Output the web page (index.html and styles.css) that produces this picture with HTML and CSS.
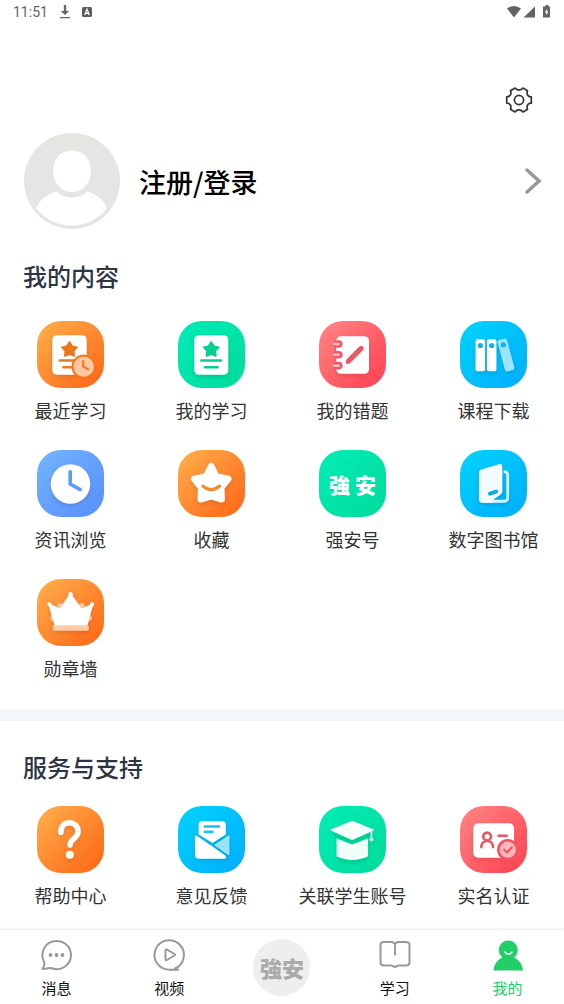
FILE: index.html
```html
<!DOCTYPE html>
<html lang="zh-CN">
<head>
  <meta charset="UTF-8" />
  <meta name="viewport" content="width=device-width, initial-scale=1.0"/>
  <title>我的</title>
  <link rel="stylesheet" href="styles.css">
</head>
<body>

  <div class="status-bar">
    <span class="time">11:51</span>
    <svg width="12" height="14" viewBox="0 0 12 14"><path d="M4.800 0h2.400v6h3L6 10 1.800 6h3zM1 12h10v1.200H1z" fill="#666"/></svg>
    <svg class="app-badge" width="10" height="10" viewBox="0 0 10 10"><rect width="10" height="10" rx="1.500" fill="#5c5c5c"/><path d="M2.700 8 5 2.300 7.300 8M3.600 6.300h2.800" fill="none" stroke="#fff" stroke-width="1.300"/></svg>
    <svg class="signals" width="44" height="14" viewBox="0 0 44 14">
      <path d="M0 3.500Q7 -1.500 14 3.500L7 12.500z" fill="#636363"/>
      <path d="M28 1.500v11H16.500z" fill="#636363"/>
      <path d="M37 1.500h1.500V0h3v1.500H43V12.500h-7V1.500z" fill="#636363"/>
      <path d="M40.300 3.500 37.800 7.500h1.500v3l2.200-4h-1.500z" fill="#fff"/>
    </svg>
  </div>

  <main>
    <div class="toolbar">
      <button class="settings" aria-label="设置">
        <svg width="28" height="28" viewBox="0 0 28 28" fill="none" stroke="#333" stroke-width="1.700" stroke-linejoin="round">
          <path d="M10 2.100Q11.500 4.200 14 4.200T18 2.100L22.500 4.700Q21.500 7 22.600 9T26.300 10.800V17.200Q23.700 17.200 22.600 19T22.500 23.300L18 25.900Q16.500 23.800 14 23.800T10 25.900L5.500 23.300Q6.500 21 5.400 19T1.700 17.200V10.800Q4.300 10.800 5.400 9T5.500 4.700Z"/>
          <circle cx="14" cy="14" r="4.600"/>
        </svg>
      </button>
    </div>

    <a class="profile" href="#login">
      <svg class="avatar" width="96" height="96" viewBox="0 0 96 96">
        <circle cx="48" cy="48" r="48" fill="#e5e5e4"/>
        <path d="M48 17.500c11 0 19 8.500 19 20.500S59 59 48 59 29 50 29 38s8-20.500 19-20.500z" fill="#fff"/>
        <path d="M12 75C17 65 25 60.500 32.500 58.500 41 66.500 55 66.500 63.500 58.500 71 60.500 79 66 83 75 65 98.500 30 98.500 12 75z" fill="#fff"/>
      </svg>
      <span class="login">注册/登录</span>
      <svg width="18" height="28" viewBox="0 0 18 28"><path d="M3 3 15 14 3 25" fill="none" stroke="#999" stroke-width="3.500" stroke-linecap="round"/></svg>
    </a>

    <section class="content">
      <h2>我的内容</h2>
      <div class="grid">
        <a class="item" href="#recent">
          <svg class="tile orange" viewBox="0 0 66 66">
            <g class="raised"><rect x="15" y="14" width="34" height="39" rx="4.500" fill="#fff"/></g>
            <path d="M32 20.500l2.700 4.300 4.800 1-3.300 3.800.5 4.900-4.700-1.800-4.700 1.800.5-4.900-3.300-3.800 4.800-1z" fill="#e9781f" stroke="#e9781f" stroke-width="1.500" stroke-linejoin="round"/>
            <path d="M22.500 39H39M26 45.500h9" stroke="#e9781f" stroke-width="2.400" stroke-linecap="round"/>
            <circle cx="46" cy="45" r="12" fill="#f5751d"/>
            <circle cx="46" cy="45" r="10" fill="#ffc8a0"/>
            <path d="M45.500 39.500v5.500l5 2.500" fill="none" stroke="#f27420" stroke-width="2" stroke-linecap="round"/>
          </svg>
          <span>最近学习</span>
        </a>
        <a class="item" href="#study">
          <svg class="tile green" viewBox="0 0 66 66">
            <g class="raised"><rect x="16" y="14" width="33.500" height="39" rx="4.500" fill="#fff"/></g>
            <path d="M32.700 20.500l2.700 4.300 4.800 1-3.300 3.800.5 4.900-4.700-1.800-4.700 1.800.5-4.900-3.300-3.800 4.800-1z" fill="#06cf91" stroke="#06cf91" stroke-width="1.500" stroke-linejoin="round"/>
            <path d="M23 39h19.500M26.500 45.500h12.500" stroke="#06cf91" stroke-width="2.400" stroke-linecap="round"/>
          </svg>
          <span>我的学习</span>
        </a>
        <a class="item" href="#mistakes">
          <svg class="tile red" viewBox="0 0 66 66">
            <g class="raised"><rect x="17" y="15" width="32.300" height="37" rx="4.500" fill="#fff"/></g>
            <path d="M18 22.700h1.500M18 33.300h1.500M18 44h1.500" stroke="#ef5864" stroke-width="7.500" stroke-linecap="round"/>
            <path d="M14.800 22.700h4.500M14.800 33.300h4.500M14.800 44h4.500" stroke="#ffc1c4" stroke-width="2.400" stroke-linecap="round"/>
            <path d="M29 39.500 41.500 27" stroke="#ea5964" stroke-width="5" stroke-linecap="round"/>
            <path d="M26.500 38.500v3.500h3.500z" fill="#ea5964"/>
          </svg>
          <span>我的错题</span>
        </a>
        <a class="item" href="#download">
          <svg class="tile blue" viewBox="0 0 66 66">
            <g class="raised">
              <rect x="15.300" y="18" width="9.400" height="31.500" rx="2" fill="#fff"/>
              <rect x="26.500" y="18" width="9.400" height="31.500" rx="2" fill="#fff"/>
              <rect x="40.500" y="17.500" width="9.600" height="32" rx="2" fill="#9ce4fb" transform="rotate(-15 45.300 33.500)"/>
            </g>
            <g fill="#10b4ef"><circle cx="20" cy="24.200" r="2.600"/><circle cx="31.200" cy="24.200" r="2.600"/><circle cx="42.700" cy="23.500" r="2.600"/></g>
          </svg>
          <span>课程下载</span>
        </a>
        <a class="item" href="#news">
          <svg class="tile indigo" viewBox="0 0 66 66">
            <g class="raised"><circle cx="33" cy="33.500" r="19.500" fill="#fff"/></g>
            <path d="M32.700 21.500V33.500L42.500 39" fill="none" stroke="#5d9bf7" stroke-width="3.600" stroke-linecap="round" stroke-linejoin="round"/>
          </svg>
          <span>资讯浏览</span>
        </a>
        <a class="item" href="#favorites">
          <svg class="tile orange" viewBox="0 0 66 66">
            <g class="raised"><path d="M32.700 16 37.700 26 49.500 28.500 42.500 37 43 48.500 32.700 45.500 22.400 48.500 22.900 37 16 28.500 27.700 26Z" fill="#fff" stroke="#fff" stroke-width="6.500" stroke-linejoin="round"/></g>
            <path d="M24.500 35.500Q32.700 42.500 41 35.500" fill="none" stroke="#f98a2c" stroke-width="3" stroke-linecap="round"/>
          </svg>
          <span>收藏</span>
        </a>
        <a class="item" href="#qiangan">
          <span class="tile green brand">強 安</span>
          <span>强安号</span>
        </a>
        <a class="item" href="#library">
          <svg class="tile blue" viewBox="0 0 66 66">
            <g class="raised">
              <path d="M43 21.300Q47 21.300 47 25V46.500Q47 50.500 43 50.500H22" fill="none" stroke="#d5f4ff" stroke-width="2.800"/>
              <path d="M18.700 22.500Q18.700 20 21 19.200L38.500 14Q41.700 13.200 41.700 16.500V40Q41.700 43.500 38.500 45L33 48.500V52H21.500Q18.700 52 18.700 49Z" fill="#f4fcff"/>
              <path d="M21 46H35L32 51H21Z" fill="#f4fcff"/>
            </g>
            <path d="M29.500 43 35.500 41" stroke="#10a9e6" stroke-width="4" stroke-linecap="round"/>
          </svg>
          <span>数字图书馆</span>
        </a>
        <a class="item" href="#medals">
          <svg class="tile orange" viewBox="0 0 66 66">
            <g fill="#ffcba4"><circle cx="22.700" cy="27" r="3"/><circle cx="44" cy="27" r="3"/><circle cx="16" cy="38.500" r="3"/><circle cx="51" cy="38.500" r="3"/></g>
            <g class="raised">
              <path d="M12 25 22.700 30 33 15 43.700 30 54.700 25 49 45.500H18Z" fill="#fff" stroke="#fff" stroke-width="1.500" stroke-linejoin="round"/>
              <g fill="#fff"><circle cx="33" cy="15" r="2.200"/><circle cx="12.300" cy="25" r="2"/><circle cx="54.200" cy="25" r="2"/></g>
              <rect x="15.500" y="45.500" width="35.500" height="5.500" rx="1.500" fill="#ffcba8"/>
            </g>
          </svg>
          <span>勋章墙</span>
        </a>
      </div>
    </section>

    <section class="support">
      <h2>服务与支持</h2>
      <div class="grid">
        <a class="item" href="#help">
          <svg class="tile orange" viewBox="0 0 66 66">
            <g class="raised">
              <path d="M23.500 26C23.500 13 40.500 14 40.500 25 40.500 32 32.500 32 32.500 38.500" fill="none" stroke="#fff" stroke-width="5.500" stroke-linecap="round"/>
              <circle cx="32.300" cy="48" r="4" fill="#fff"/>
            </g>
          </svg>
          <span>帮助中心</span>
        </a>
        <a class="item" href="#feedback">
          <svg class="tile blue" viewBox="0 0 66 66">
            <g class="raised">
              <path d="M20.300 18Q20.300 15 23.500 15H43.500Q47 15 47 18V28L34 36.500 20.300 28Z" fill="#fff"/>
              <path d="M16.700 30.500Q16.700 28 19 29.500L47 49Q48 52 45.500 52H20.500Q16.700 52 16.700 48Z" fill="#fff"/>
              <path d="M49 29.500Q50.700 28.500 50.700 30.500V47Q50.700 49 49 48L35.500 38.300Z" fill="#9be3fc"/>
            </g>
            <path d="M26.500 20.200H40.500M26.500 25.500H34" stroke="#1fbdf1" stroke-width="2.600" stroke-linecap="round"/>
          </svg>
          <span>意见反馈</span>
        </a>
        <a class="item" href="#accounts">
          <svg class="tile green" viewBox="0 0 66 66">
            <g class="raised">
              <path d="M17.300 32 32.700 38 48.300 32V49.500Q33 57 17.300 49.500Z" fill="#effff9"/>
              <path d="M11.700 23.700 32.700 15 53.500 23.700 32.700 33Z" fill="#f4fffb" stroke="#f4fffb" stroke-linejoin="round"/>
              <path d="M51.700 25V34" stroke="#c5f9e8" stroke-width="1.800"/><circle cx="51.700" cy="33" r="2" fill="#c5f9e8"/>
            </g>
            <path d="M16 28.500 32.700 35.700 49.500 28.500" fill="none" stroke="#05ce92" stroke-width="2.600"/>
          </svg>
          <span>关联学生账号</span>
        </a>
        <a class="item" href="#verify">
          <svg class="tile red" viewBox="0 0 66 66">
            <g class="raised"><rect x="13" y="17" width="40.300" height="34" rx="5" fill="#fff"/></g>
            <g fill="none" stroke="#ea5663" stroke-width="2.600" stroke-linecap="round"><circle cx="26.700" cy="30" r="3.800"/><path d="M21 40.500C21 32.500 32.500 32.500 32.500 40.500M38 29.300H46"/></g>
            <circle cx="47" cy="43" r="10.500" fill="#f25362"/>
            <circle cx="47" cy="43" r="8" fill="#ffb5b9"/>
            <path d="M43.500 43 46.300 45.800 51 40.800" fill="none" stroke="#ee4f5f" stroke-width="2" stroke-linecap="round"/>
          </svg>
          <span>实名认证</span>
        </a>
      </div>
    </section>
  </main>

  <nav class="tab-bar">
    <a class="tab" href="#messages">
      <svg width="32" height="32" viewBox="0 0 32 32">
        <path d="M4.500 24C-1 14 5 2 16.500 2 24.500 2 31 8 31 16 31 26 21 33 11 29L2.500 30Q4.500 27 4.500 24Z" fill="none" stroke="#999" stroke-width="2" stroke-linejoin="round"/>
        <g fill="#999"><circle cx="10.500" cy="16" r="1.900"/><circle cx="16.500" cy="16" r="1.900"/><circle cx="22.500" cy="16" r="1.900"/></g>
      </svg>
      <span>消息</span>
    </a>
    <a class="tab" href="#video">
      <svg width="32" height="32" viewBox="0 0 32 32" fill="none" stroke="#999" stroke-width="2" stroke-linejoin="round" stroke-linecap="round">
        <path d="M25 30.700H16A14.700 14.700 0 1 1 22 29.500L25 30.700"/>
        <path d="M12.500 11.500Q12.500 10 14 10.700L21.500 15Q22.500 15.800 21.500 16.500L14 21Q12.500 21.500 12.500 20.200Z"/>
      </svg>
      <span>视频</span>
    </a>
    <a class="tab-center" href="#home">強安</a>
    <a class="tab" href="#learn">
      <svg width="32" height="32" viewBox="0 0 32 32" fill="none" stroke="#999" stroke-width="2" stroke-linejoin="round" stroke-linecap="round">
        <path d="M16 5.500Q15 3 12.500 3H5Q1.500 3 1.500 6V23.500Q1.500 26.500 5 26.500H12.500L16 28 19.500 26.500H27Q30.500 26.500 30.500 23.500V6Q30.500 3 27 3H19.500Q17 3 16 5.500V15.500"/>
      </svg>
      <span>学习</span>
    </a>
    <a class="tab active" href="#mine">
      <svg width="32" height="32" viewBox="0 0 32 32">
        <path d="M1.500 31.500C2 25 6 20.500 10.500 18.500A9.500 9.500 0 1 1 22 18.500C26.500 20.500 30.500 25 31 31.500Z" fill="#23cd67"/>
        <path d="M13 13Q16.500 17.500 20 13" fill="none" stroke="#fff" stroke-width="1.500" stroke-linecap="round"/>
      </svg>
      <span>我的</span>
    </a>
  </nav>

</body>
</html>
```
FILE: styles.css
```css
body {
  margin: 0;
  min-height: 100vh;
  display: flex;
  flex-direction: column;
  background: #fff;
  color: #333;
  font-family: "Noto Sans CJK SC", sans-serif;
}

a {
  color: inherit;
  text-decoration: none;
}

svg {
  display: block;
}

main {
  flex: 1;
}

.status-bar {
  display: flex;
  align-items: center;
  height: 24px;
  padding: 0 13px;
  gap: 11px;
}

.time {
  font-family: Roboto, sans-serif;
  font-size: 14px;
  color: #666;
}

.signals {
  margin-left: auto;
}

.toolbar {
  display: flex;
  justify-content: flex-end;
  padding: 62px 31px 19px;
}

.settings {
  padding: 0;
  border: none;
  background: none;
  cursor: pointer;
}

.profile {
  display: flex;
  align-items: center;
  padding: 0 22px 0 24px;
}

.login {
  flex: 1;
  margin-left: 19px;
  font-size: 27px;
  font-weight: 500;
  color: #000;
}

h2 {
  margin: 0;
  padding: 0 23px;
  font-size: 24px;
  font-weight: 500;
  line-height: 36px;
  color: #2d3544;
}

.content {
  padding: 29px 0 28px;
  border-bottom: 12px solid #f5f6f8;
}

.content .grid {
  margin-top: 27px;
}

.support {
  padding: 28px 0 20px;
}

.support .grid {
  margin-top: 21px;
}

.grid {
  display: grid;
  grid-template-columns: repeat(4, 1fr);
  row-gap: 27px;
}

.item {
  display: flex;
  flex-direction: column;
  align-items: center;
  gap: 9px;
  font-size: 18px;
  line-height: 26px;
  white-space: nowrap;
}

.tile {
  width: 67px;
  height: 67px;
  border-radius: 24px;
}

.orange {
  background: linear-gradient(135deg, #ffb04c, #ff6414);
}

.green {
  background: linear-gradient(135deg, #00edb6, #00db9b);
}

.red {
  background: linear-gradient(135deg, #ff8685, #ff3f50);
}

.blue {
  background: linear-gradient(135deg, #00d4fa, #00adff);
}

.indigo {
  background: linear-gradient(135deg, #72b5fb, #588dff);
}

.raised {
  filter: drop-shadow(0 2px 2px rgba(0, 0, 0, 0.12));
}

.brand {
  display: flex;
  align-items: center;
  justify-content: center;
  font-family: "Noto Sans CJK TC", sans-serif;
  font-size: 21px;
  font-weight: 900;
  color: #fff;
}

.tab-bar {
  display: grid;
  grid-template-columns: repeat(5, 1fr);
  justify-items: center;
  height: 74px;
  background: #fff;
  box-shadow: 0 -1px 3px rgba(0, 0, 0, 0.1);
}

.tab {
  display: flex;
  flex-direction: column;
  align-items: center;
  gap: 6px;
  padding-top: 9px;
  font-size: 15px;
  line-height: 22px;
  color: #111;
}

.tab.active {
  color: #23cd67;
}

.tab-center {
  display: flex;
  align-items: center;
  justify-content: center;
  align-self: center;
  width: 57px;
  height: 57px;
  border-radius: 50%;
  background: #eee;
  font-family: "Noto Sans CJK TC", sans-serif;
  font-size: 22px;
  font-weight: 900;
  color: #aaa;
}
```
